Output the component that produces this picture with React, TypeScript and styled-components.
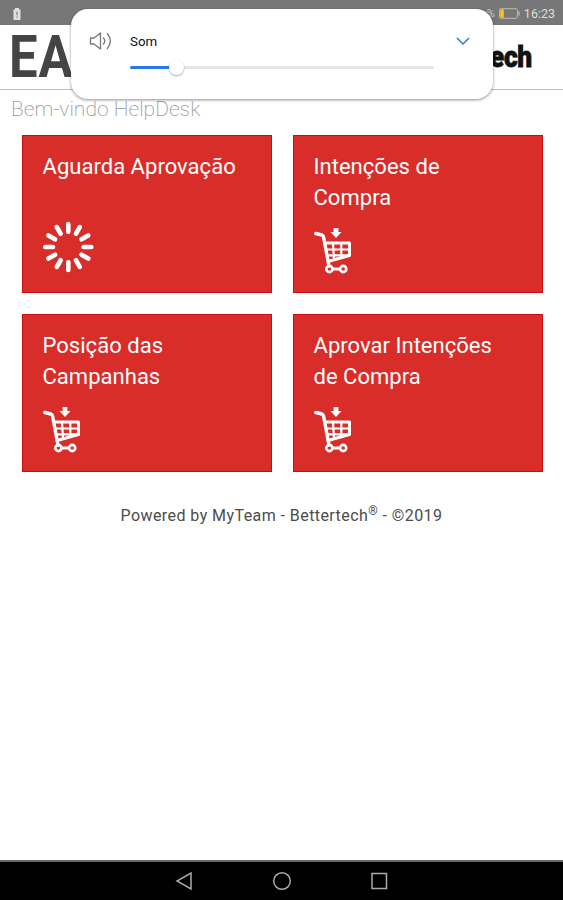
import React from 'react';
import styled, { createGlobalStyle } from 'styled-components';

const GlobalStyle = createGlobalStyle`
  * { box-sizing: border-box; }
  body { margin: 0; background: #fff; font-family: Roboto, "Liberation Sans", sans-serif; }
`;

const Screen = styled.div`
  position: relative;
  display: flex;
  flex-direction: column;
  width: 563px;
  height: 900px;
  overflow: hidden;
  background: #fff;
`;

const StatusBar = styled.div`
  display: flex;
  align-items: center;
  justify-content: space-between;
  flex: none;
  height: 25px;
  padding: 2px 8px 0 12px;
  background: #777;
  color: #dedede;
  font-size: 12.5px;
`;

const StatusGroup = styled.div`
  display: flex;
  align-items: center;
  gap: 4px;
`;

const Percent = styled.span`
  font-size: 11px;
  color: #c8c8c8;
`;

const Header = styled.header`
  display: flex;
  align-items: center;
  justify-content: space-between;
  flex: none;
  height: 65px;
  padding: 0 31px 0 8px;
  border-bottom: 1px solid #dfb0b6;
`;

const Brand = styled.div`
  color: #444446;
  font-size: 59px;
  font-weight: 700;
  line-height: 64px;
  letter-spacing: 1px;
  transform: translateX(1px) scaleX(0.86);
  transform-origin: left;
`;

const Partner = styled.div`
  color: #111;
  font-size: 30px;
  font-weight: 900;
  line-height: 64px;
  letter-spacing: -0.3px;
  -webkit-text-stroke: 0.8px #111;
  transform: scaleX(0.88);
  transform-origin: right;
`;

const Welcome = styled.h1`
  flex: none;
  margin: 0;
  height: 45px;
  padding: 5px 11px 0;
  color: #999;
  font-size: 21px;
  font-weight: 200;
  line-height: 28px;
`;

const Grid = styled.main`
  display: grid;
  grid-template-columns: 250px 250px;
  grid-auto-rows: 158px;
  gap: 21px;
  padding-left: 21.5px;
  flex: none;
`;

const Card = styled.section`
  display: flex;
  flex-direction: column;
  justify-content: space-between;
  padding: 15px 28px 18px 20px;
  background: #d92d2a;
  border: 1px solid #cb0c0e;
  color: #fff;
`;

const CardTitle = styled.h2`
  margin: 0;
  font-size: 22px;
  font-weight: 400;
  line-height: 31px;
  letter-spacing: 0.03px;
`;

const Footer = styled.footer`
  flex: 1;
  padding-top: 32px;
  color: #4c4c4c;
  font-size: 16px;
  line-height: 24px;
  text-align: center;
  letter-spacing: 0.43px;

  sup { font-size: 12px; line-height: 0; }
`;

const NavBar = styled.nav`
  display: flex;
  justify-content: center;
  align-items: center;
  gap: 77px;
  flex: none;
  height: 40px;
  border-top: 2px solid #686868;
  background: #000;
`;

const VolumePanel = styled.aside`
  position: absolute;
  left: 71px;
  top: 9px;
  width: 422px;
  height: 90px;
  padding: 20px 22px 0 18px;
  display: grid;
  grid-template-columns: 24px 304px 1fr;
  grid-template-rows: 24px 28px;
  column-gap: 17px;
  align-items: center;
  background: #fff;
  border-radius: 17px;
  box-shadow: 0 1px 3px rgba(0, 0, 0, 0.45);
`;

const VolumeLabel = styled.span`
  color: #111;
  font-size: 13.3px;
  font-weight: 400;
`;

const Chevron = styled.svg`
  justify-self: end;
`;

const Track = styled.div`
  grid-column: 2;
  display: flex;
  align-items: center;
  height: 3px;
  border-radius: 2px;
  background: #e5e5e5;
`;

const Level = styled.div`
  width: 39px;
  height: 3px;
  border-radius: 2px 0 0 2px;
  background: #2878ec;
`;

const Thumb = styled.div`
  width: 15px;
  height: 15px;
  border-radius: 50%;
  background: #fff;
  box-shadow: 0 1px 2px rgba(0, 0, 0, 0.35);
`;

const SpinnerIcon = () => (
  <svg width="52" height="52" viewBox="-25.3 -25 52 52" overflow="visible" stroke="#fff" strokeWidth="4.6" strokeLinecap="round">
    {Array.from({ length: 12 }, (_, i) => (
      <line key={i} x1="0" y1="-23" x2="0" y2="-15.3" transform={`rotate(${i * 30})`} />
    ))}
  </svg>
);

const CartIcon = () => (
  <svg width="38" height="46" viewBox="0 0 38 46" fill="none" stroke="#fff" strokeLinecap="round" strokeLinejoin="round">
    <path d="M1.8 5.5 8 7 Q9.3 7.5 9.6 9.2L15 38" strokeWidth="3.4" />
    <path d="M11 15H35.5V27.5L14 33.5" strokeWidth="3" />
    <path d="M19 15 20 31M27.3 15V29M12.5 21.5H35M13.5 27.3H34" strokeWidth="2.2" />
    <path d="M18.5 41H25.5" strokeWidth="3" />
    <circle cx="15.4" cy="41" r="3.1" strokeWidth="2.6" />
    <circle cx="29.2" cy="41" r="3.1" strokeWidth="2.6" />
    <path d="M19.6 0H24.4V4H27.5L22 10 16.5 4H19.6Z" fill="#fff" stroke="none" />
  </svg>
);

const cards = [
  { title: 'Aguarda Aprovação', Icon: SpinnerIcon },
  { title: 'Intenções de Compra', Icon: CartIcon },
  { title: 'Posição das Campanhas', Icon: CartIcon },
  { title: 'Aprovar Intenções de Compra', Icon: CartIcon },
];

export default function App() {
  return (
    <Screen>
      <GlobalStyle />
      <StatusBar>
        <svg width="10" height="12" viewBox="0 0 10 12">
          <path d="M3 0h4v1.5h1.5v10.5h-7V1.5H3Z" fill="#e0e0e0" />
          <path d="M5 3.5v3.7M5 8.5v1.2" stroke="#888" strokeWidth="1.3" />
        </svg>
        <StatusGroup>
          <Percent>%</Percent>
          <svg width="21" height="11" viewBox="0 0 21 11" fill="none">
            <rect x=".6" y=".7" width="17.8" height="9.6" rx="1.5" stroke="#bdbdbd" />
            <path d="M20 3.5v4" stroke="#bdbdbd" strokeWidth="1.4" />
            <rect x="1.3" y="1.5" width="3.5" height="8" fill="#ffc21c" />
          </svg>
          <span>16:23</span>
        </StatusGroup>
      </StatusBar>
      <Header>
        <Brand>EA</Brand>
        <Partner>tech</Partner>
      </Header>
      <Welcome>Bem-vindo HelpDesk</Welcome>
      <Grid>
        {cards.map(({ title, Icon }) => (
          <Card key={title}>
            <CardTitle>{title}</CardTitle>
            <Icon />
          </Card>
        ))}
      </Grid>
      <Footer>
        Powered by MyTeam - Bettertech<sup>®</sup> - ©2019
      </Footer>
      <NavBar>
        <svg width="20" height="20" viewBox="0 0 20 20" fill="none" stroke="#aaa" strokeWidth="1.5">
          <path d="M16 2V18L2 10Z" />
        </svg>
        <svg width="20" height="20" viewBox="0 0 20 20" fill="none" stroke="#aaa" strokeWidth="1.5">
          <circle cx="10" cy="10" r="8.3" />
        </svg>
        <svg width="20" height="20" viewBox="0 0 20 20" fill="none" stroke="#aaa" strokeWidth="1.5">
          <rect x="3" y="2.5" width="14.5" height="15" />
        </svg>
      </NavBar>
      <VolumePanel>
        <svg width="24" height="22" viewBox="0 0 24 22" fill="none" stroke="#777" strokeWidth="1.3" strokeLinecap="round" strokeLinejoin="round">
          <path d="M1.5 8H5L11.5 3V19L5 14H1.5Z" />
          <path d="M14.5 8Q17 11 14.5 14M18.3 3.5Q24.5 11 18.3 18.5" />
        </svg>
        <VolumeLabel>Som</VolumeLabel>
        <Chevron width="16" height="10" viewBox="0 0 16 10" fill="none" stroke="#2878ec" strokeWidth="1.5">
          <path d="M2 2 8 8 14 2" />
        </Chevron>
        <Track>
          <Level />
          <Thumb />
        </Track>
      </VolumePanel>
    </Screen>
  );
}
